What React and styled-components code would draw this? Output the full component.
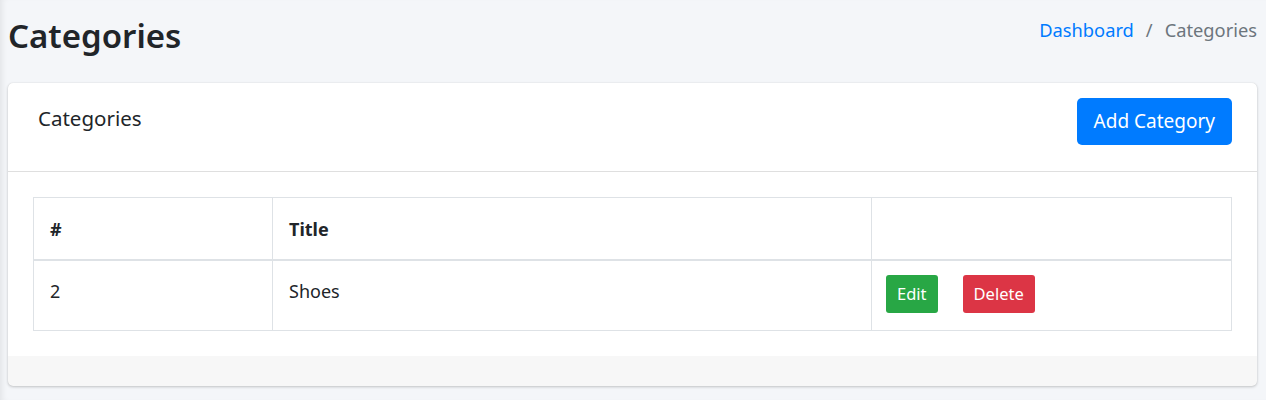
import styled, { createGlobalStyle } from 'styled-components'

const GlobalStyle = createGlobalStyle`
  html, body {
    margin: 0;
    padding: 0;
    background: #f4f6f9;
    font-family: "Noto Sans", "Open Sans", sans-serif;
    color: #212529;
  }
`

const Page = styled.div`
  width: 1266px;
  height: 400px;
  box-sizing: border-box;
  padding: 0 9px 0 8px;
  background: #f4f6f9;
  box-shadow: inset 6px 0 6px -4px rgba(0, 0, 0, 0.08);
`

const TopBar = styled.div`
  display: flex;
  justify-content: space-between;
  align-items: flex-start;
  height: 83px;
`

const PageTitle = styled.h1`
  margin: 14px 0 0;
  font-size: 33px;
  font-weight: 600;
  line-height: 44px;
  color: #212529;
`

const Breadcrumb = styled.ol`
  display: flex;
  list-style: none;
  margin: 17px 0 0;
  padding: 0;
  font-size: 18.3px;
  line-height: 26px;
`

const Crumb = styled.li`
  color: ${(p) => (p.$active ? '#6c757d' : '#007bff')};

  &:not(:first-child)::before {
    content: '/';
    color: #6c757d;
    padding: 0 12px 0 12px;
  }
`

const Card = styled.div`
  background: #fff;
  border-radius: 5px;
  box-shadow: 0 0 1px rgba(0, 0, 0, 0.125), 0 1px 3px rgba(0, 0, 0, 0.2);
  overflow: hidden;
`

const CardHeader = styled.div`
  display: flex;
  justify-content: space-between;
  align-items: flex-start;
  height: 89px;
  box-sizing: border-box;
  padding: 15px 25px 0 30px;
  border-bottom: 1px solid rgba(0, 0, 0, 0.125);
`

const CardTitle = styled.h3`
  margin: 7px 0 0;
  font-size: 20.5px;
  font-weight: 400;
  line-height: 26px;
`

const Button = styled.button`
  font-family: inherit;
  border: none;
  color: #fff;
  cursor: pointer;
  background: ${(p) => p.$bg};
  border-radius: ${(p) => (p.$small ? '3px' : '5px')};
  font-size: ${(p) => (p.$small ? '16.5px' : '19px')};
  height: ${(p) => (p.$small ? '38px' : '47px')};
  padding: ${(p) => (p.$small ? '0 11px' : '0 17px')};
  line-height: 1;
`

const CardBody = styled.div`
  padding: 25px;
`

const Table = styled.table`
  width: 100%;
  border-collapse: collapse;
  font-size: 18px;

  th,
  td {
    border: 1px solid #dee2e6;
    padding: 0 16px;
    text-align: left;
  }

  th {
    height: 61px;
    font-weight: 700;
    vertical-align: middle;
    border-bottom: 2px solid #dee2e6;
  }

  td {
    height: 70px;
    box-sizing: border-box;
    padding-top: 18px;
    vertical-align: top;
  }
`

const Actions = styled.div`
  display: flex;
  gap: 25px;
  margin: -4px 0 0 -2px;
`

const CardFooter = styled.div`
  height: 30px;
  background: rgba(0, 0, 0, 0.03);
`

export default function App() {
  return (
    <>
      <GlobalStyle />
      <Page>
        <TopBar>
          <PageTitle>Categories</PageTitle>
          <Breadcrumb>
            <Crumb>Dashboard</Crumb>
            <Crumb $active>Categories</Crumb>
          </Breadcrumb>
        </TopBar>
        <Card>
          <CardHeader>
            <CardTitle>Categories</CardTitle>
            <Button $bg="#007bff">Add Category</Button>
          </CardHeader>
          <CardBody>
            <Table>
              <colgroup>
                <col style={{ width: '239px' }} />
                <col style={{ width: '599px' }} />
                <col />
              </colgroup>
              <thead>
                <tr>
                  <th>#</th>
                  <th>Title</th>
                  <th></th>
                </tr>
              </thead>
              <tbody>
                <tr>
                  <td>2</td>
                  <td>Shoes</td>
                  <td>
                    <Actions>
                      <Button $small $bg="#28a745">Edit</Button>
                      <Button $small $bg="#dc3545">Delete</Button>
                    </Actions>
                  </td>
                </tr>
              </tbody>
            </Table>
          </CardBody>
          <CardFooter />
        </Card>
      </Page>
    </>
  )
}
